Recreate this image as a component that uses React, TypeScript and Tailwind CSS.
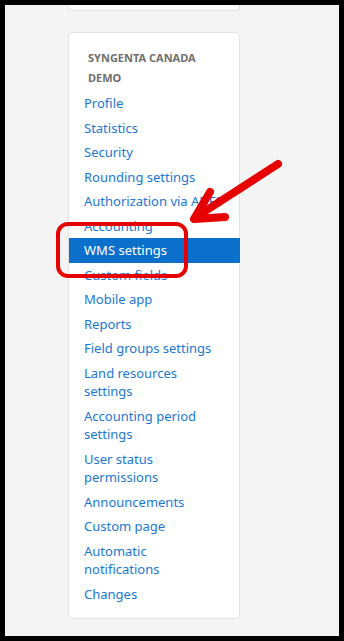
const links = [
  "Profile",
  "Statistics",
  "Security",
  "Rounding settings",
  "Authorization via ADFS",
  "Accounting",
  "WMS settings",
  "Custom fields",
  "Mobile app",
  "Reports",
  "Field groups settings",
  "Land resources settings",
  "Accounting period settings",
  "User status permissions",
  "Announcements",
  "Custom page",
  "Automatic notifications",
  "Changes",
];

const App = () => {
  return (
    <div
      className="relative h-[641px] w-[344px] overflow-hidden border-[5px] border-black bg-[#f4f4f4]"
      style={{ fontFamily: '"Noto Sans", "Open Sans", sans-serif' }}
    >
      <div className="pl-[63px]">
        {/* card above, mostly scrolled away */}
        <div className="h-[6px] w-[172px] rounded-b border border-t-0 border-[#e2e2e2] bg-white" />

        <div className="mt-[21px] w-[172px] rounded border border-[#e2e2e2] bg-white pt-[15px] pb-[12px]">
          <div className="pl-[19px] pr-3 text-[11px] font-bold uppercase leading-[20px] text-[#6e6e6e]">
            Syngenta Canada Demo
          </div>
          <ul className="mt-[3px]">
            {links.map((label) => {
              const active = label === "WMS settings";
              return (
                <li key={label}>
                  <a
                    href="#"
                    className={`block py-[3px] pl-[15px] pr-[14px] text-[13px] leading-[18.5px] ${
                      active ? "-mr-px bg-[#0a70cc] text-white" : "text-[#1a78d2]"
                    } ${label === "Authorization via ADFS" ? "whitespace-nowrap" : ""}`}
                  >
                    {label}
                  </a>
                </li>
              );
            })}
          </ul>
        </div>
      </div>

      {/* red annotation */}
      <svg
        className="pointer-events-none absolute left-[-5px] top-[-5px]"
        width="344"
        height="641"
        viewBox="0 0 344 641"
      >
        <rect x="58" y="224" width="128" height="52" rx="10" fill="none" stroke="#e60000" strokeWidth="4" />
        <g stroke="#e60000" strokeWidth="8" strokeLinecap="round" strokeLinejoin="round" fill="none">
          <line x1="278" y1="164" x2="196" y2="217" />
          <polyline points="210,192 194,219 225,217" />
        </g>
      </svg>
    </div>
  );
};

export default App;
